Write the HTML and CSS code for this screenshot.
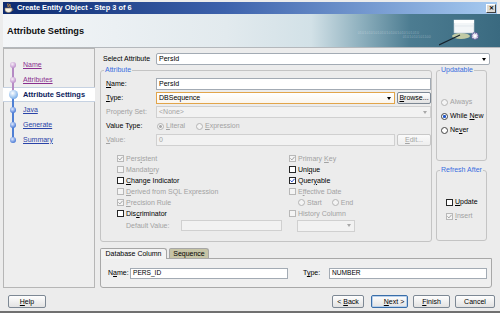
FILE: index.html
```html
<!DOCTYPE html>
<html lang="en">
<head>
  <meta charset="UTF-8">
  <title>Create Entity Object - Step 3 of 6</title>
  <link rel="stylesheet" href="styles.css">
</head>
<body>
  <div class="dialog">
    <div class="titlebar">
      <svg class="app-icon" width="10" height="10" viewBox="0 0 10 10">
        <path d="M4 0.5 C3 2 5 2.5 4 4" stroke="#f0a030" stroke-width="1" fill="none"/>
        <path d="M6 1 C5 2.5 7 3 6 4.5" stroke="#f0a030" stroke-width="1" fill="none"/>
        <path d="M1 5 H8 V7 C8 8.5 6.5 9.5 4.5 9.5 C2.5 9.5 1 8.5 1 7 Z" fill="#f4f0e4" stroke="#8a7050" stroke-width="0.6"/>
        <path d="M8 6 H9 V7.5 H8" fill="none" stroke="#8a7050" stroke-width="0.6"/>
      </svg>
      <span class="title">Create Entity Object - Step 3 of 6</span>
      <span class="close">&#x2715;</span>
    </div>

    <div class="banner">
      <h1>Attribute Settings</h1>
      <div class="bits">0101010101010101001010101010<br><span>0101010101100</span></div>
      <svg class="wizard-art" width="46" height="28" viewBox="0 0 46 28">
        <ellipse cx="22" cy="18" rx="9" ry="3" fill="#f6efb0" opacity="0.7"/>
        <rect x="15" y="2" width="20" height="13" fill="#f3f6f8" stroke="#b8c6d0" stroke-width="0.6"/>
        <rect x="15" y="2" width="20" height="3" fill="#ffffff"/>
        <line x1="16" y1="8" x2="34" y2="8" stroke="#d8e0e6" stroke-width="0.6"/>
        <line x1="0" y1="27" x2="21" y2="17" stroke="#16242e" stroke-width="1.2"/>
        <circle cx="36" cy="18" r="3.2" fill="#e6e4f0" stroke="#6b5fa0" stroke-width="1.4" stroke-dasharray="1.2 0.9"/>
        <circle cx="36" cy="18" r="1.2" fill="#ffffff"/>
      </svg>
    </div>

    <div class="main">
      <ul class="steps">
        <li class="done first"><span class="mark"><span class="dot"></span></span><a>Name</a></li>
        <li class="done"><span class="mark"><span class="dot"></span></span><a>Attributes</a></li>
        <li class="current"><span class="mark"><span class="dot"></span></span><b>Attribute Settings</b></li>
        <li class="todo"><span class="mark"><span class="dot"></span></span><a>Java</a></li>
        <li class="todo"><span class="mark"><span class="dot"></span></span><a>Generate</a></li>
        <li class="todo last"><span class="mark"><span class="dot"></span></span><a>Summary</a></li>
      </ul>

      <div class="content">
        <div class="select-row">
          <label>Select Attribute</label>
          <div class="combo attr-pick">PersId</div>
        </div>

        <div class="groups">
          <fieldset class="box attr">
            <legend>Attribute</legend>
            <div class="form">
              <label><span><u>N</u>ame:</span></label>
              <div class="field"><div class="text grow">PersId</div></div>

              <label><span><u>T</u>ype:</span></label>
              <div class="field"><div class="combo focus grow">DBSequence</div><button class="btn small"><u>B</u>rowse...</button></div>

              <label class="off">Property Set:</label>
              <div class="field"><div class="combo off grow">&lt;None&gt;</div></div>

              <label>Value Type:</label>
              <div class="field radios">
                <span class="opt off lit"><span class="rd on"></span><span><u>L</u>iteral</span></span>
                <span class="opt off"><span class="rd"></span><span><u>E</u>xpression</span></span>
              </div>

              <label class="off"><span><u>V</u>alue:</span></label>
              <div class="field"><div class="text off grow">0</div><button class="btn small" disabled><u>E</u>dit...</button></div>
            </div>

            <div class="flags">
              <span class="opt off"><span class="cb"><svg viewBox="0 0 5 5"><path d="M0.4 2.4 L1.9 3.9 L4.6 0.8"/></svg></span><span>Pers<u>i</u>stent</span></span>
              <span class="opt off"><span class="cb"><svg viewBox="0 0 5 5"><path d="M0.4 2.4 L1.9 3.9 L4.6 0.8"/></svg></span><span>Primary <u>K</u>ey</span></span>

              <span class="opt off"><span class="cb"></span><span>Mandat<u>o</u>ry</span></span>
              <span class="opt"><span class="cb"></span><span>Uni<u>q</u>ue</span></span>

              <span class="opt"><span class="cb"></span><span><u>C</u>hange Indicator</span></span>
              <span class="opt"><span class="cb blue"><svg viewBox="0 0 5 5"><path d="M0.4 2.4 L1.9 3.9 L4.6 0.8"/></svg></span><span>Quer<u>y</u>able</span></span>

              <span class="opt off"><span class="cb"></span><span><u>D</u>erived from SQL Expression</span></span>
              <span class="opt off"><span class="cb"></span><span>E<u>f</u>fective Date</span></span>

              <span class="opt off"><span class="cb"><svg viewBox="0 0 5 5"><path d="M0.4 2.4 L1.9 3.9 L4.6 0.8"/></svg></span><span><u>P</u>recision Rule</span></span>
              <span class="opt off dates"><span class="rd"></span><span>Start</span><span class="rd end"></span><span>End</span></span>

              <span class="opt"><span class="cb"></span><span>Dis<u>c</u>riminator</span></span>
              <span class="opt off"><span class="cb"></span><span>History Column</span></span>

              <span class="opt off default"><span>Default Value:</span><span class="text off dv"></span></span>
              <span class="hist"><span class="combo off"></span></span>
            </div>
          </fieldset>

          <div class="side">
            <fieldset class="box upd">
              <legend>Updatable</legend>
              <span class="opt off"><span class="rd"></span><span>Always</span></span>
              <span class="opt"><span class="rd on blue"></span><span>While <u>N</u>ew</span></span>
              <span class="opt"><span class="rd"></span><span>Ne<u>v</u>er</span></span>
            </fieldset>
            <fieldset class="box refresh">
              <legend>Refresh After</legend>
              <span class="opt"><span class="cb"></span><span><u>U</u>pdate</span></span>
              <span class="opt off"><span class="cb"><svg viewBox="0 0 5 5"><path d="M0.4 2.4 L1.9 3.9 L4.6 0.8"/></svg></span><span><u>I</u>nsert</span></span>
            </fieldset>
          </div>
        </div>

        <div class="tabs">
          <span class="tab active">Database Column</span>
          <span class="tab seq">Sequence</span>
        </div>
        <div class="tabpanel">
          <label><span>N<u>a</u>me:</span></label>
          <div class="text col">PERS_ID</div>
          <label class="type-lbl"><span>T<u>y</u>pe:</span></label>
          <div class="text col">NUMBER</div>
        </div>
      </div>
    </div>

    <div class="footer">
      <button class="btn help"><u>H</u>elp</button>
      <div class="nav-btns">
        <button class="btn back">&lt; <u>B</u>ack</button>
        <button class="btn next default"><u>N</u>ext &gt;</button>
        <button class="btn finish"><u>F</u>inish</button>
        <button class="btn cancel">Cancel</button>
      </div>
    </div>
  </div>
</body>
</html>
```

FILE: styles.css
```css
* {
  box-sizing: border-box;
}
body {
  margin: 0;
  background: #ececec;
  font-family: "Liberation Sans", Arial, sans-serif;
  font-size: 7px;
  line-height: 8px;
  color: #000;
}
u {
  text-decoration-thickness: 0.6px;
  text-underline-offset: 1px;
}
.dialog {
  width: 500px;
  height: 313px;
  padding: 0 3px;
  background: #ececec;
  border-bottom: 2px solid #707070;
  display: flex;
  flex-direction: column;
}

/* title bar */
.titlebar {
  height: 12px;
  margin-top: 2px;
  display: flex;
  align-items: center;
  padding: 0 1px 0 1px;
  background: linear-gradient(90deg, #0c2a70 0%, #3d62ac 45%, #a6caf0 100%);
  color: #fff;
  font-weight: bold;
  font-size: 7.4px;
}
.app-icon {
  margin-right: 3px;
}
.close {
  margin-left: auto;
  width: 10px;
  height: 9px;
  background: #dcdad4;
  border: 1px solid;
  border-color: #fff #404040 #404040 #fff;
  color: #000;
  font-size: 6px;
  display: flex;
  align-items: center;
  justify-content: center;
}

/* banner */
.banner {
  height: 34px;
  margin-right: -3px;
  display: flex;
  align-items: center;
  background: linear-gradient(90deg, #f4f6f8 0%, #e2eaee 45%, #d2e1e7 62%, #8eb0be 72%, #4c7c91 82%, #3a6a80 100%);
  border-bottom: 1px solid #b4b8bc;
  padding-left: 4px;
}
.banner h1 {
  margin: 0;
  font-size: 9.2px;
  font-weight: bold;
  color: #111;
}
.bits {
  margin-left: auto;
  margin-top: 8px;
  font-size: 3.6px;
  line-height: 4px;
  color: rgba(255, 255, 255, 0.35);
  letter-spacing: 0.2px;
}
.bits span {
  padding-left: 45px;
}
.wizard-art {
  margin: 2px 15px 0 8px;
}

/* main area */
.main {
  height: 240px;
  display: flex;
}
.steps {
  list-style: none;
  margin: 0;
  padding: 8px 0 0 0;
  width: 94px;
  border: 1px solid #b6b6b6;
  background: #eeeeee;
}
.steps li {
  height: 15px;
  display: flex;
  align-items: center;
  white-space: nowrap;
}
.steps .mark {
  position: relative;
  width: 18px;
  height: 15px;
  flex: none;
  display: flex;
  align-items: center;
  justify-content: center;
}
.steps .mark::before,
.steps .mark::after {
  content: "";
  position: absolute;
  left: 8px;
  width: 1.5px;
}
.steps .mark::before {
  top: 0;
  height: 50%;
}
.steps .mark::after {
  top: 50%;
  bottom: 0;
}
.steps .done .mark::before,
.steps .done .mark::after,
.steps .current .mark::before {
  background: #b58ac4;
}
.steps .current .mark::after,
.steps .todo .mark::before,
.steps .todo .mark::after {
  background: #4f7fd4;
}
.steps .first .mark::before,
.steps .last .mark::after {
  display: none;
}
.steps .dot {
  position: relative;
  z-index: 1;
  width: 6px;
  height: 6px;
  border-radius: 50%;
}
.steps .done .dot {
  background: radial-gradient(circle at 40% 35%, #f6ecf6, #b888c8 80%);
}
.steps .todo .dot {
  background: radial-gradient(circle at 40% 35%, #dce8ff, #3c70d2 80%);
}
.steps .current {
  background: #fff;
  border-top: 1px solid #c6d2e2;
  border-bottom: 1px solid #c6d2e2;
  margin: 0 -1px 0 -1px;
  padding-left: 1px;
}
.steps .current .dot {
  width: 9px;
  height: 9px;
  background: radial-gradient(circle at 40% 35%, #ffffff, #8ab8ec 65%, #4a80d0);
}
.steps a {
  margin-left: 1px;
  text-decoration: underline;
  text-decoration-thickness: 0.6px;
}
.steps .done a {
  color: #8a2f8e;
}
.steps .todo a {
  color: #2a43a8;
}
.steps b {
  margin-left: 1px;
  font-size: 7.4px;
  color: #0c1a5c;
}

.content {
  flex: 1;
  display: flex;
  flex-direction: column;
  padding: 4px 5px 0 5px;
}
.select-row {
  height: 14px;
  display: flex;
  align-items: center;
}
.select-row label {
  width: 56px;
  padding-left: 3px;
}
.attr-pick {
  flex: 1;
  height: 14px;
  margin-right: 2px;
  background: linear-gradient(#ffffff, #f0f0f0);
  border-color: #aab0b8;
  border-radius: 2px;
}

/* controls */
.text,
.combo {
  height: 12px;
  display: flex;
  align-items: center;
  padding-left: 2px;
  background: #fff;
  border: 1px solid #a3abb4;
  white-space: nowrap;
}
.combo::after {
  content: "";
  margin-left: auto;
  margin-right: 3px;
  border-left: 2.5px solid transparent;
  border-right: 2.5px solid transparent;
  border-top: 3px solid #000;
}
.combo.focus {
  border-color: #e2a54a;
  background: linear-gradient(#ffffff, #fbf6ee);
}
.text.off,
.combo.off {
  background: #f2f2f2;
  border-color: #d0d0d0;
  color: #a4a4a4;
}
.combo.off::after {
  border-top-color: #a8a8a8;
}
.grow {
  flex: 1;
}
.btn {
  height: 13px;
  padding: 0;
  font: inherit;
  color: #000;
  background: linear-gradient(#fefefe, #e2e2e2);
  border: 1px solid #7d8894;
  border-radius: 2px;
}
.btn:disabled {
  color: #a4a4a4;
  border-color: #c8c8c8;
  background: linear-gradient(#fafafa, #eeeeee);
}
.btn.small {
  width: 34px;
  height: 12px;
  margin-left: 2px;
}

.box {
  margin: 0;
  padding-left: 3px;
  padding-right: 0;
  border: 1px solid #c4c4c4;
  border-radius: 3px;
  min-width: 0;
}
.box legend {
  padding: 0 1px;
  margin: 0;
  color: #3a6de0;
  line-height: 8px;
  white-space: nowrap;
}
.opt {
  display: flex;
  align-items: center;
  white-space: nowrap;
}
.off {
  color: #a2a2a2;
}
.cb {
  width: 7px;
  height: 7px;
  flex: none;
  margin-right: 2px;
  border: 1px solid #262626;
  background: #fff;
  display: flex;
  align-items: center;
  justify-content: center;
}
.off .cb {
  border-color: #b8b8b8;
  background: #f4f4f4;
}
.cb svg {
  width: 5px;
  height: 5px;
  fill: none;
  stroke: #202020;
  stroke-width: 1;
}
.off .cb svg {
  stroke: #a0a0a0;
}
.cb.blue svg {
  stroke: #2246c8;
}
.rd {
  width: 7px;
  height: 7px;
  flex: none;
  margin-right: 2px;
  border: 1px solid #444;
  border-radius: 50%;
  background: #fff;
}
.off .rd {
  border-color: #b4b4b4;
  background: #f4f4f4;
}
.rd.on {
  background: radial-gradient(circle, #333 1.2px, #fff 1.6px);
}
.off .rd.on {
  background: radial-gradient(circle, #a8a8a8 1.2px, #f4f4f4 1.6px);
}
.rd.on.blue {
  background: radial-gradient(circle, #2458c8 1.3px, #fff 1.8px);
}

/* attribute group */
.groups {
  display: flex;
  gap: 4px;
}
.attr {
  width: 332px;
  padding-top: 4px;
  padding-bottom: 9px;
}
.form {
  margin-left: 2px;
  display: grid;
  grid-template-columns: 50px 275px;
  grid-auto-rows: 12px;
  row-gap: 2px;
}
.form label {
  display: flex;
  align-items: center;
}
.field {
  display: flex;
  align-items: center;
}
.radios .opt {
  margin-left: 1px;
}
.radios .lit {
  width: 38px;
}
.flags {
  margin-top: 7px;
  padding-left: 13px;
  display: grid;
  grid-template-columns: 172px 1fr;
  grid-template-rows: repeat(6, 11px) 13px;
}
.dates {
  padding-left: 9px;
}
.dates .end {
  margin-left: 10px;
}
.default {
  padding-left: 9px;
}
.dv {
  width: 101px;
  height: 11px;
  margin-left: 12px;
}
.hist {
  padding-left: 8px;
  display: flex;
  align-items: center;
}
.hist .combo {
  width: 58px;
  height: 12px;
}

/* side groups */
.side {
  width: 51px;
  display: flex;
  flex-direction: column;
  gap: 5px;
}
.upd {
  height: 95px;
  padding-top: 21px;
}
.upd .opt {
  height: 14px;
  margin-left: 1px;
}
.refresh {
  height: 75px;
  padding-top: 21px;
}
.refresh .opt {
  height: 14px;
  margin-left: 6px;
}

/* tabs */
.tabs {
  margin-top: 6px;
  height: 10px;
  display: flex;
  gap: 2px;
  align-items: flex-end;
}
.tab {
  height: 10px;
  display: flex;
  align-items: center;
  justify-content: center;
  white-space: nowrap;
  border: 1px solid #a6a6a6;
  border-bottom: none;
  border-radius: 2px 3px 0 0;
}
.tab.active {
  height: 11px;
  width: 67px;
  background: #f3f3f3;
  position: relative;
  top: 1px;
}
.tab.seq {
  width: 40px;
  background: #c6c4a6;
}
.tabpanel {
  height: 30px;
  display: flex;
  align-items: center;
  padding: 0 4px 0 7px;
  border: 1px solid #a8a8a8;
  border-radius: 0 0 3px 3px;
  background: #efefef;
}
.tabpanel label {
  width: 22px;
}
.tabpanel .col {
  width: 158px;
  height: 11px;
  font-size: 6.6px;
}
.tabpanel .type-lbl {
  margin-left: 15px;
  width: 26px;
}

/* footer */
.footer {
  height: 23px;
  display: flex;
  align-items: flex-start;
  padding: 7px 2px 0 5px;
}
.help {
  width: 38px;
}
.nav-btns {
  margin-left: auto;
  display: flex;
}
.back {
  width: 32px;
}
.next {
  width: 37px;
  margin-left: 7px;
}
.btn.default {
  border-color: #3a6ea8;
  box-shadow: inset 0 0 0 1px #b8d0ec;
}
.finish {
  width: 37px;
  margin-left: 5px;
}
.cancel {
  width: 40px;
  margin-left: 5px;
}
```
